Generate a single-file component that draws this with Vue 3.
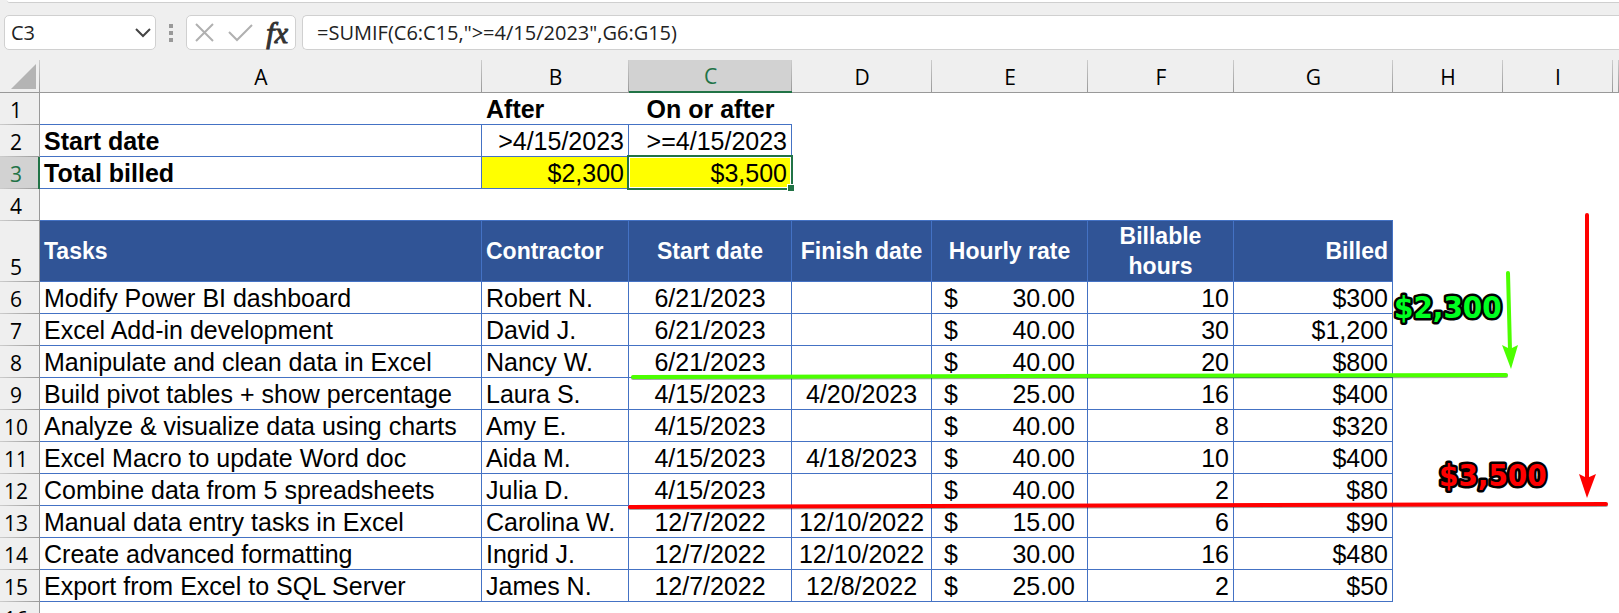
<script setup>
import { ref } from 'vue'

const columns = ['A', 'B', 'C', 'D', 'E', 'F', 'G', 'H', 'I', '']
const cellName = ref('C3')
const formula = ref('=SUMIF(C6:C15,">=4/15/2023",G6:G15)')

const tasks = [
  ['Modify Power BI dashboard', 'Robert N.', '6/21/2023', '', '30.00', '10', '$300'],
  ['Excel Add-in development', 'David J.', '6/21/2023', '', '40.00', '30', '$1,200'],
  ['Manipulate and clean data in Excel', 'Nancy W.', '6/21/2023', '', '40.00', '20', '$800'],
  ['Build pivot tables + show percentage', 'Laura S.', '4/15/2023', '4/20/2023', '25.00', '16', '$400'],
  ['Analyze & visualize data using charts', 'Amy E.', '4/15/2023', '', '40.00', '8', '$320'],
  ['Excel Macro to update Word doc', 'Aida M.', '4/15/2023', '4/18/2023', '40.00', '10', '$400'],
  ['Combine data from 5 spreadsheets', 'Julia D.', '4/15/2023', '', '40.00', '2', '$80'],
  ['Manual data entry tasks in Excel', 'Carolina W.', '12/7/2022', '12/10/2022', '15.00', '6', '$90'],
  ['Create advanced formatting', 'Ingrid J.', '12/7/2022', '12/10/2022', '30.00', '16', '$480'],
  ['Export from Excel to SQL Server', 'James N.', '12/7/2022', '12/8/2022', '25.00', '2', '$50'],
]
</script>

<template>
  <main class="app">
    <div class="ribbon-edge"></div>
    <div class="formula-bar">
      <div class="name-box">
        <input v-model="cellName" class="name-input" aria-label="Name box" />
        <button class="drop" aria-label="Open name list">
          <svg width="18" height="12" viewBox="0 0 18 12"><path d="M2 2l7 7 7-7" fill="none" stroke="#444" stroke-width="2" /></svg>
        </button>
      </div>
      <div class="grip"><i></i><i></i><i></i></div>
      <div class="actions">
        <button aria-label="Cancel">
          <svg width="20" height="20" viewBox="0 0 20 20"><path d="M1 1l17 17M18 1L1 18" fill="none" stroke="#b0b0b0" stroke-width="2" /></svg>
        </button>
        <button aria-label="Enter">
          <svg width="25" height="20" viewBox="0 0 25 20"><path d="M1 9l8 8L24 2" fill="none" stroke="#b0b0b0" stroke-width="2" /></svg>
        </button>
        <button class="fx" aria-label="Insert function">fx</button>
      </div>
      <input v-model="formula" class="formula" aria-label="Formula" />
    </div>

    <section class="sheet">
      <table>
        <colgroup>
          <col class="w-head" /><col class="w-a" /><col class="w-b" /><col class="w-c" /><col class="w-d" />
          <col class="w-e" /><col class="w-f" /><col class="w-g" /><col class="w-h" /><col class="w-h" /><col />
        </colgroup>
        <thead>
          <tr>
            <th class="corner"><svg width="25" height="25" viewBox="0 0 25 25"><path d="M25 0V25H0z" fill="#b4b4b4" /></svg></th>
            <th v-for="c in columns" :key="c" class="col-head" :class="{ active: c === 'C' }" scope="col">{{ c }}</th>
          </tr>
        </thead>
        <tbody>
          <tr>
            <th class="row-head" scope="row">1</th>
            <td class="under"></td>
            <td class="under bold">After</td>
            <td class="under bold center">On or after</td>
            <td colspan="7"></td>
          </tr>
          <tr>
            <th class="row-head" scope="row">2</th>
            <td class="box bold">Start date</td>
            <td class="box right">&gt;4/15/2023</td>
            <td class="box right">&gt;=4/15/2023</td>
            <td colspan="7"></td>
          </tr>
          <tr>
            <th class="row-head active" scope="row">3</th>
            <td class="box bold">Total billed</td>
            <td class="box right yellow">$2,300</td>
            <td class="box right yellow selected">$3,500</td>
            <td colspan="7"></td>
          </tr>
          <tr>
            <th class="row-head" scope="row">4</th>
            <td v-for="n in 7" :key="n" class="under"></td>
            <td colspan="3"></td>
          </tr>
          <tr class="titles">
            <th class="row-head" scope="row">5</th>
            <td class="box">Tasks</td>
            <td class="box">Contractor</td>
            <td class="box center">Start date</td>
            <td class="box center">Finish date</td>
            <td class="box center">Hourly rate</td>
            <td class="box center">Billable<br />hours</td>
            <td class="box right">Billed</td>
            <td colspan="3"></td>
          </tr>
          <tr v-for="(t, i) in tasks" :key="i">
            <th class="row-head" scope="row">{{ i + 6 }}</th>
            <td class="box">{{ t[0] }}</td>
            <td class="box">{{ t[1] }}</td>
            <td class="box center">{{ t[2] }}</td>
            <td class="box center">{{ t[3] }}</td>
            <td class="box"><div class="money"><span>$</span><span>{{ t[4] }}</span></div></td>
            <td class="box right">{{ t[5] }}</td>
            <td class="box right">{{ t[6] }}</td>
            <td colspan="3"></td>
          </tr>
          <tr>
            <th class="row-head" scope="row">16</th>
            <td colspan="10"></td>
          </tr>
        </tbody>
      </table>

      <svg class="marks" width="1619" height="553" viewBox="0 60 1619 553">
        <g fill="none" stroke="#000" stroke-opacity=".35" stroke-linecap="round" stroke-width="4">
          <path d="M633 378L1506 376M630 508L1606 505" />
        </g>
        <g fill="none" stroke="#4cff00" stroke-linecap="round" stroke-width="4">
          <path d="M633 377L1506 375" />
          <path d="M1508 273L1510 350" />
        </g>
        <path d="M1502 345L1510 349L1518 345L1511 369z" fill="#4cff00" />
        <g fill="none" stroke="#ff0000" stroke-linecap="round" stroke-width="4">
          <path d="M630 507L1606 504" />
          <path d="M1587 215V480" />
        </g>
        <path d="M1579 474L1587 478L1596 474L1587 498z" fill="#ff0000" />
        <text class="callout" x="1394" y="318" fill="#00ff21">$2,300</text>
        <text class="callout" x="1439" y="486" fill="#ff0000">$3,500</text>
      </svg>
    </section>
  </main>
</template>

<style>
body {
  margin: 0;
  background: #fff;
}
</style>

<style scoped>
.app {
  height: 100vh;
  overflow: hidden;
  background: #efefef;
  color: #000;
  font-family: "Liberation Sans", Arial, sans-serif;
}
.ribbon-edge {
  box-sizing: border-box;
  height: 3px;
  margin-left: 7px;
  background: #fff;
  border-bottom: 1px solid #cfcfcf;
  border-bottom-left-radius: 6px;
}
.formula-bar {
  display: flex;
  height: 35px;
  padding: 12px 0 10px 4px;
}
.name-box,
.actions,
.formula {
  box-sizing: border-box;
  height: 35px;
  background: #fff;
  border: 1px solid #d0d0d0;
  border-radius: 5px;
}
.name-box {
  display: flex;
  width: 152px;
}
button {
  display: flex;
  align-items: center;
  justify-content: center;
  padding: 0;
  border: 0;
  background: none;
  color: #333;
}
input {
  min-width: 0;
  padding: 0;
  color: #222;
  font-family: "Open Sans", "Noto Sans", sans-serif;
  font-size: 20px;
  outline: none;
}
.name-input {
  flex: 1;
  padding-left: 6px;
  border: 0;
  background: none;
}
.drop {
  width: 24px;
}
.grip {
  display: flex;
  flex-direction: column;
  justify-content: center;
  align-items: center;
  gap: 3px;
  width: 30px;
}
.grip i {
  width: 4px;
  height: 4px;
  background: #999;
}
.actions {
  display: flex;
  align-items: center;
  justify-content: space-between;
  width: 110px;
  padding: 0 7px 0 8px;
}
.fx {
  font: italic 30px "Liberation Serif", serif;
  -webkit-text-stroke: 1px #333;
}
.formula {
  flex: 1;
  margin-left: 6px;
  padding-left: 14px;
  border-right: 0;
  border-top-right-radius: 0;
  border-bottom-right-radius: 0;
}
.sheet {
  position: relative;
}
table {
  width: 100%;
  table-layout: fixed;
  border-collapse: separate;
  border-spacing: 0;
  background: #fff;
}
.w-head { width: 40px; }
.w-a { width: 442px; }
.w-b { width: 147px; }
.w-c { width: 163px; }
.w-d { width: 140px; }
.w-e { width: 156px; }
.w-f { width: 146px; }
.w-g { width: 159px; }
.w-h { width: 110px; }
th,
td {
  box-sizing: border-box;
  height: 32px;
  padding: 1px 4px 0 4px;
  font-size: 25px;
  font-weight: 400;
  line-height: 30px;
  text-align: left;
  white-space: nowrap;
}
.corner,
.col-head {
  height: 33px;
  padding: 0;
  border-bottom: 1px solid #999;
  background: linear-gradient(#ccc, #999) right / 1px 100% no-repeat #efefef;
}
.col-head {
  padding-top: 2px;
}
.corner svg {
  display: block;
  margin: 0 0 0 11px;
}
.col-head,
.row-head {
  font-family: "Open Sans", "Noto Sans", sans-serif;
  font-size: 21px;
  text-align: center;
}
.col-head.active {
  padding-top: 1px;
  border-bottom: 2px solid #217346;
  background-color: #d2d2d2;
  color: #217346;
}
.row-head {
  padding: 1px 7px 0 0;
  border-right: 1px solid #999;
  background: linear-gradient(90deg, #ccc, #999) bottom / 100% 1px no-repeat #efefef;
  vertical-align: bottom;
}
.row-head.active {
  padding-right: 6px;
  border-right: 2px solid #217346;
  background-color: #d2d2d2;
  color: #217346;
}
.under {
  border-bottom: 1px solid #4472c4;
}
.box {
  border-right: 1px solid #4472c4;
  border-bottom: 1px solid #4472c4;
}
.bold {
  font-weight: 700;
}
.center {
  text-align: center;
}
.right {
  text-align: right;
}
.yellow {
  background: #ff0;
}
.selected {
  position: relative;
}
.selected::before {
  content: "";
  position: absolute;
  inset: -2px;
  border: 2px solid #217346;
  box-shadow: inset 0 0 0 1px #fff;
}
.selected::after {
  content: "";
  position: absolute;
  right: -3px;
  bottom: -3px;
  width: 6px;
  height: 6px;
  border: 1px solid #fff;
  border-right: 0;
  border-bottom: 0;
  background: #217346;
}
.titles td,
.titles th {
  height: 61px;
  padding-top: 0;
}
.titles .box {
  background: #305496;
  color: #fff;
  font-size: 23px;
  font-weight: 700;
}
.money {
  display: flex;
  justify-content: space-between;
  padding: 0 8px;
}
.marks {
  position: absolute;
  top: 0;
  left: 0;
  pointer-events: none;
}
.callout {
  font-family: "DejaVu Sans Condensed", "DejaVu Sans", sans-serif;
  font-size: 31px;
  font-weight: 700;
  stroke: #000;
  stroke-width: 5px;
  stroke-linejoin: round;
  paint-order: stroke;
}
</style>
